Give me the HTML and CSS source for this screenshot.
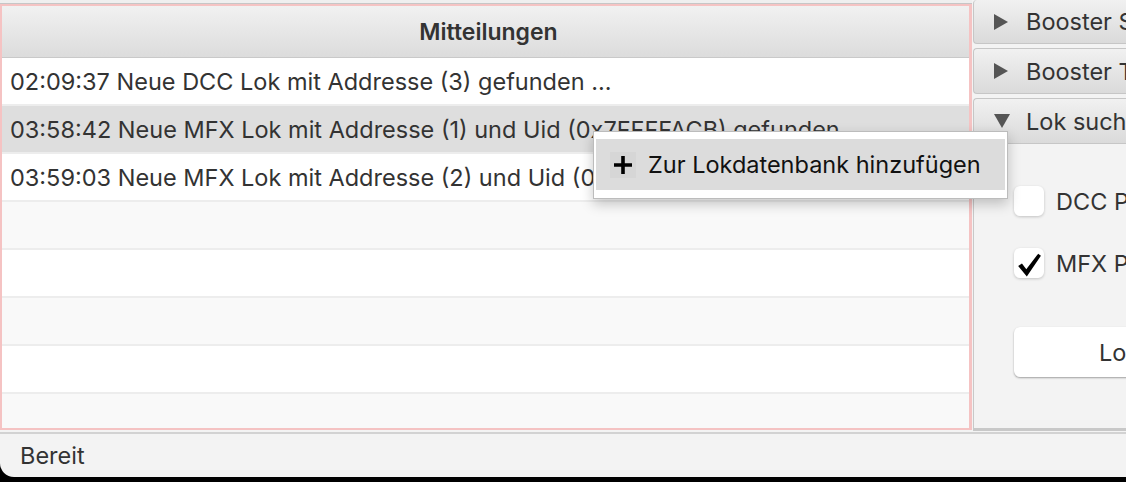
FILE: index.html
```html
<!DOCTYPE html>
<html lang="de">
<head>
    <meta charset="UTF-8">
    <title>Mitteilungen</title>
    <link rel="stylesheet" href="styles.css">
</head>
<body>
    <div class="window">
        <div class="main">
            <section class="messages">
                <div class="edge"></div>
                <div class="table">
                    <div class="table-head">Mitteilungen</div>
                    <div class="row">02:09:37 Neue DCC Lok mit Addresse (3) gefunden ...</div>
                    <div class="row selected">03:58:42 Neue MFX Lok mit Addresse (1) und Uid (0x7FFFFACB) gefunden ...</div>
                    <div class="row">03:59:03 Neue MFX Lok mit Addresse (2) und Uid (0x7FFFFACC) gefunden ...</div>
                    <div class="row odd"></div>
                    <div class="row"></div>
                    <div class="row odd"></div>
                    <div class="row"></div>
                    <div class="row odd"></div>
                </div>
            </section>

            <aside class="side">
                <div class="pane-title">
                    <svg class="arrow" viewBox="0 0 16 18"><polygon points="1,1 15,9 1,17" /></svg>
                    Booster Status
                </div>
                <div class="pane-title">
                    <svg class="arrow" viewBox="0 0 16 18"><polygon points="1,1 15,9 1,17" /></svg>
                    Booster Temperatur
                </div>
                <div class="pane-title open">
                    <svg class="arrow" viewBox="0 0 18 16"><polygon points="1,1 17,1 9,15" /></svg>
                    Lok suchen
                </div>
                <div class="pane-body">
                    <label class="check">
                        <span class="box"></span>
                        DCC Protokoll
                    </label>
                    <label class="check">
                        <span class="box">
                            <svg viewBox="0 0 24 24"><path d="M2 13 L5.5 10.5 L9.5 16 L20.5 1.5 L23 3.5 L10 22.5 Z" /></svg>
                        </span>
                        MFX Protokoll
                    </label>
                    <button class="search">Lok suchen</button>
                </div>
            </aside>
        </div>

        <footer class="status">Bereit</footer>
    </div>

    <div class="menu">
        <div class="menu-item">
            <span class="plus">
                <svg viewBox="0 0 20 20"><path d="M8.2 1h3.6v7.2H19v3.6h-7.2V19H8.2v-7.2H1V8.2h7.2z" /></svg>
            </span>
            Zur Lokdatenbank hinzufügen
        </div>
    </div>
</body>
</html>
```

FILE: styles.css
```css
body {
    margin: 0;
    height: 482px;
    overflow: hidden;
    background: #000;
    font-family: Inter, "Noto Sans", sans-serif;
    font-size: 23.5px;
    color: #333;
}

.window {
    height: 477px;
    background: #f3f3f3;
    border-bottom-left-radius: 14px;
    overflow: hidden;
    display: flex;
    flex-direction: column;
}

.main {
    height: 431px;
    display: flex;
}

/* messages table */
.messages {
    width: 972px;
    flex-shrink: 0;
}

.edge {
    height: 3px;
    background: #efefef;
    border-bottom: 1px solid #c6c6c6;
}

.table {
    height: 426px;
    box-sizing: border-box;
    border: 2px solid #f5c3c3;
    border-right-width: 3px;
    background: #fff;
    overflow: hidden;
}

.table-head {
    height: 52px;
    box-sizing: border-box;
    border-bottom: 1px solid #c9c9c9;
    background: linear-gradient(#f1f1f1, #dcdcdc);
    padding-left: 6px;
    display: flex;
    align-items: center;
    justify-content: center;
    font-weight: 600;
    font-size: 23px;
    color: #333;
}

.row {
    height: 48px;
    box-sizing: border-box;
    border-bottom: 2px solid #ededed;
    padding-left: 8px;
    padding-top: 1px;
    display: flex;
    align-items: center;
    white-space: nowrap;
    background: #fff;
}

.row.odd {
    background: #f9f9f9;
}

.row.selected {
    background: #dedede;
}

/* right accordion */
.side {
    flex: 1;
    min-width: 0;
    padding-left: 1px;
    overflow: hidden;
    white-space: nowrap;
    display: flex;
    flex-direction: column;
}

.pane-title {
    height: 46px;
    flex-shrink: 0;
    box-sizing: border-box;
    margin-top: 4px;
    border: 1px solid #c6c6c6;
    border-right: none;
    border-radius: 4px 0 0 4px;
    background: linear-gradient(#f1f1f1, #dadada);
    display: flex;
    align-items: center;
    gap: 17px;
    padding-left: 19px;
}

.pane-title:first-child {
    margin-top: 0;
    border-top: none;
    height: 44px;
}

.pane-title.open {
    border-radius: 4px 0 0 0;
    gap: 15px;
}

.arrow {
    width: 16px;
    height: 18px;
    fill: #555;
    flex-shrink: 0;
}

.open .arrow {
    width: 18px;
    height: 16px;
}

.pane-body {
    flex: 1;
    background: #f3f3f3;
    border-left: 1px solid #c8c8c8;
    border-bottom: 3px solid #c8c8c8;
    padding: 42px 0 0 40px;
    display: flex;
    flex-direction: column;
    align-items: flex-start;
}

.check {
    display: flex;
    align-items: center;
    gap: 12px;
    height: 30px;
    margin-bottom: 32px;
}

.box {
    width: 30px;
    height: 30px;
    box-sizing: border-box;
    background: #fff;
    border-radius: 6px;
    box-shadow: 0 1px 3px rgba(0, 0, 0, 0.2);
    display: flex;
    align-items: center;
    justify-content: center;
}

.box svg {
    width: 26px;
    height: 26px;
    fill: #000;
    margin-top: 4px;
}

.search {
    margin-top: 17px;
    width: 298px;
    height: 50px;
    flex-shrink: 0;
    border: none;
    border-radius: 6px;
    background: #fff;
    box-shadow: 0 1px 2px rgba(0, 0, 0, 0.35);
    font-family: inherit;
    font-size: 23.5px;
    color: #333;
}

/* status bar */
.status {
    flex: 1;
    border-top: 2px solid #d2d2d2;
    margin-top: 1px;
    padding-left: 20px;
    display: flex;
    align-items: center;
    color: #333;
}

/* context menu */
.menu {
    position: absolute;
    left: 593px;
    top: 131px;
    width: 415px;
    box-sizing: border-box;
    padding: 7px 2px 8px;
    background: #fff;
    border: 1px solid #bcbcbc;
    box-shadow: 0 5px 12px rgba(0, 0, 0, 0.22);
}

.menu-item {
    height: 51px;
    background: #dcdcdc;
    display: flex;
    align-items: center;
    gap: 12px;
    padding-left: 14px;
    color: #111;
    white-space: nowrap;
}

.plus {
    width: 26px;
    height: 26px;
    background: #d6d6d6;
    display: flex;
    align-items: center;
    justify-content: center;
}

.plus svg {
    width: 20px;
    height: 20px;
    fill: #000;
}
```
